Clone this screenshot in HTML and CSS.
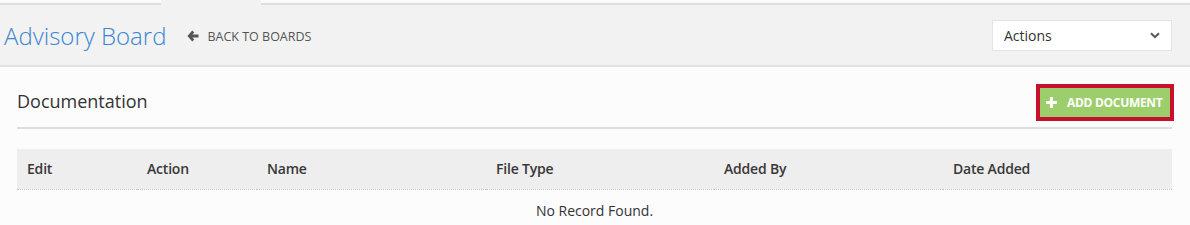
FILE: index.html
```html
<!DOCTYPE html>
<html>
<head>
<meta charset="utf-8">
<link rel="stylesheet" href="styles.css">
</head>
<body>
<div class="topstrip">
  <div class="seg seg-left"></div>
  <div class="seg seg-tab"></div>
  <div class="seg seg-right"></div>
</div>
<header class="header">
  <h1 class="title">Advisory Board</h1>
  <a class="back" href="#">
    <svg class="back-icon" width="12" height="12" viewBox="0 0 12 12"><path d="M5.2 0.5 L0.5 6 L5.2 11.5 L7.3 9.6 L5.4 7.5 H11.5 V4.5 H5.4 L7.3 2.4 Z" fill="#555"/></svg>
    <span>BACK TO BOARDS</span>
  </a>
  <div class="spacer"></div>
  <div class="select">
    <span>Actions</span>
    <svg width="10" height="7" viewBox="0 0 10 7"><path d="M1 1.2 L5 5.2 L9 1.2" fill="none" stroke="#555" stroke-width="2"/></svg>
  </div>
</header>
<main class="content">
  <div class="section-head">
    <h2 class="section-title">Documentation</h2>
    <button class="add-btn">
      <svg width="11" height="11" viewBox="0 0 11 11"><path d="M4 0 H7 V4 H11 V7 H7 V11 H4 V7 H0 V4 H4 Z" fill="#fff"/></svg>
      <span>ADD DOCUMENT</span>
    </button>
  </div>
  <div class="divider"></div>
  <table class="grid">
    <thead>
      <tr>
        <th class="c1">Edit</th>
        <th class="c2">Action</th>
        <th class="c3">Name</th>
        <th class="c4">File Type</th>
        <th class="c5">Added By</th>
        <th class="c6">Date Added</th>
      </tr>
    </thead>
    <tbody>
      <tr><td colspan="6" class="empty">No Record Found.</td></tr>
    </tbody>
  </table>
</main>
</body>
</html>
```

FILE: styles.css
```css
* { box-sizing: border-box; }
html, body { margin: 0; padding: 0; }
body {
  font-family: "Open Sans", "Liberation Sans", sans-serif;
  background: #fcfcfc;
  color: #333;
  width: 1190px;
  height: 225px;
  overflow: hidden;
}
.topstrip { display: flex; height: 5px; }
.seg-left { width: 161px; background: #fcfcfc; border-bottom: 2px solid #dedede; }
.seg-tab { width: 100px; background: #f2f2f2; }
.seg-right { flex: 1; background: #fcfcfc; border-bottom: 2px solid #dedede; }
.header {
  display: flex;
  align-items: center;
  height: 62px;
  background: #f2f2f2;
  border-bottom: 2px solid #e3e3e3;
  padding: 0 18px 0 4px;
}
.title {
  margin: 0;
  font-weight: 300;
  font-size: 24px;
  color: #3a87d2;
  line-height: 1;
  padding-top: 2px;
}
.back {
  display: flex;
  align-items: center;
  margin-left: 21px;
  text-decoration: none;
  color: #555;
  font-size: 12.5px;
  padding-top: 2px;
}
.back-icon { margin-right: 8px; }
.spacer { flex: 1; }
.select {
  width: 180px;
  height: 31px;
  background: #fff;
  border: 1px solid #e4e4e4;
  display: flex;
  align-items: center;
  justify-content: space-between;
  padding: 1px 11px 0 11px;
  font-size: 14px;
  color: #333;
}
.content { padding: 0 18px 0 17px; }
.section-head {
  display: flex;
  align-items: center;
  justify-content: space-between;
  height: 60px;
  padding-top: 7px;
}
.section-title {
  margin: 0;
  font-weight: 400;
  font-size: 18px;
  color: #333;
}
.add-btn {
  display: flex;
  align-items: center;
  height: 37px;
  width: 138px;
  margin-right: -2px;
  background: #9ccf6b;
  border: 4px solid #c8102e;
  color: #fff;
  font-family: "Open Sans", "Liberation Sans", sans-serif;
  font-weight: 700;
  font-size: 12px;
  letter-spacing: -0.3px;
  padding: 0 0 0 6px;
  margin-top: 3px;
}
.add-btn svg { margin-right: 10px; }
.divider { height: 2px; background: #dedede; }
.grid {
  width: 100%;
  border-collapse: collapse;
  margin-top: 20px;
  table-layout: fixed;
}
.grid th {
  background: #eeeeee;
  height: 40px;
  text-align: left;
  font-weight: 600;
  font-size: 14px;
  letter-spacing: -0.2px;
  color: #383838;
  padding: 0 10px;
  border-bottom: 1px dotted #c8c8c8;
}
.c1 { width: 120px; }
.c2 { width: 120px; }
.c3 { width: 229px; }
.c4 { width: 228px; }
.c5 { width: 229px; }
.empty {
  text-align: center;
  font-size: 14px;
  color: #333;
  height: 42px;
  padding: 0;
}
```
